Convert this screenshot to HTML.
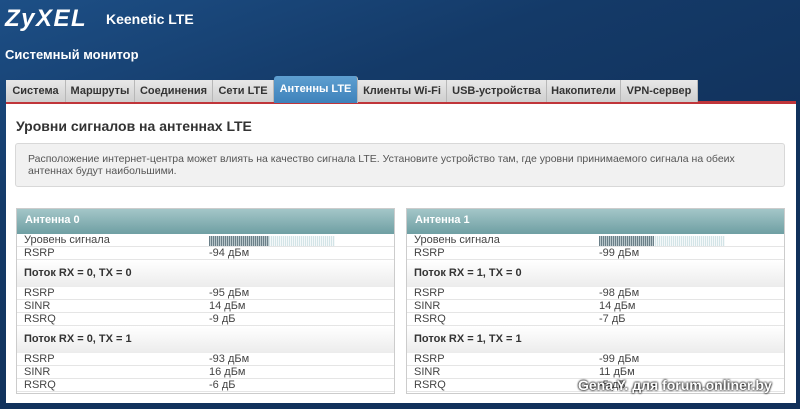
<!DOCTYPE html>
<html><head><meta charset="utf-8"><style>
*{margin:0;padding:0;box-sizing:border-box}
body{width:800px;height:409px;overflow:hidden;background:linear-gradient(160deg,#1d4f86 0%,#143a68 30%,#11325c 60%,#11305a 100%);font-family:"Liberation Sans",Arial,sans-serif;position:relative;color:#333}
.logo{position:absolute;left:5px;top:5px;color:#fff;font-weight:bold;font-style:italic;font-size:24px;letter-spacing:1.5px}
.model{position:absolute;left:106px;top:11px;color:#fff;font-weight:bold;font-size:14px}
.sys{position:absolute;left:5px;top:47px;color:#fff;font-weight:bold;font-size:13px}
.tab{position:absolute;top:80px;height:22px;background:linear-gradient(#e8e8e8,#cfcfcf);border-right:1px solid #b8b8b8;font-size:11px;font-weight:bold;color:#333;text-align:center;line-height:22px}
.tab.act{top:76px;height:27px;background:linear-gradient(#5e9fd0,#3e82bb);color:#fff;border-radius:3px 3px 0 0;line-height:26px}
.panel{position:absolute;left:6px;top:101px;width:790px;height:302px;background:#fff;border-top:3px solid #c0353a}
h1{position:absolute;left:16px;top:118px;font-size:14px;font-weight:bold;color:#333}
.info{position:absolute;left:15px;top:143px;width:770px;height:44px;background:#f1f1f1;border:1px solid #d8d8d8;border-radius:3px;font-size:10.5px;color:#555;padding:9px 12px;line-height:12px}
.tbl{position:absolute;top:208px;width:379px;height:186px;border:1px solid #ccc;font-size:11px;color:#444}
.hd{height:25px;background:linear-gradient(#a3c6c8,#6f9fa3);color:#fff;font-weight:bold;padding-left:8px;line-height:22px}
.r{height:13px;line-height:13px;border-bottom:1px solid #e5e5e5;padding-left:7px;position:relative}
.r span{position:absolute;left:192px}
.s{height:27px;line-height:26px;background:linear-gradient(#fff,#ececec);font-weight:bold;padding-left:7px;color:#333}
.bar{position:absolute;left:192px;top:2px;width:126px;height:10px;background:repeating-linear-gradient(90deg,#d3e4e7 0 1px,#f4f8f9 1px 2px)}
.bar i{display:block;height:100%;background:repeating-linear-gradient(90deg,#6a7f88 0 1px,#b8c6ca 1px 2px)}
.wm{position:absolute;left:578px;top:377px;color:#fff;font-weight:bold;font-size:14px;text-shadow:0 0 2px #000,0 0 2px #000}
</style></head><body>
<div class="logo">ZyXEL</div><div class="model">Keenetic LTE</div>
<div class="sys">Системный монитор</div>
<div class="panel"></div>
<div class="tab" style="left:6px;width:60px">Система</div>
<div class="tab" style="left:66px;width:69px">Маршруты</div>
<div class="tab" style="left:135px;width:78px">Соединения</div>
<div class="tab" style="left:213px;width:61px">Сети LTE</div>
<div class="tab act" style="left:274px;width:84px">Антенны LTE</div>
<div class="tab" style="left:358px;width:89px">Клиенты Wi-Fi</div>
<div class="tab" style="left:447px;width:100px">USB-устройства</div>
<div class="tab" style="left:547px;width:74px">Накопители</div>
<div class="tab" style="left:621px;width:77px">VPN-сервер</div>
<h1>Уровни сигналов на антеннах LTE</h1>
<div class="info">Расположение интернет-центра может влиять на качество сигнала LTE. Установите устройство там, где уровни принимаемого сигнала на обеих антеннах будут наибольшими.</div>
<div class="tbl" style="left:16px">
<div class="hd">Антенна 0</div>
<div class="r">Уровень сигнала<div class="bar"><i style="width:48%"></i></div></div>
<div class="r">RSRP<span>-94 дБм</span></div>
<div class="s">Поток RX = 0, TX = 0</div>
<div class="r">RSRP<span>-95 дБм</span></div>
<div class="r">SINR<span>14 дБм</span></div>
<div class="r">RSRQ<span>-9 дБ</span></div>
<div class="s">Поток RX = 0, TX = 1</div>
<div class="r">RSRP<span>-93 дБм</span></div>
<div class="r">SINR<span>16 дБм</span></div>
<div class="r">RSRQ<span>-6 дБ</span></div>
</div>
<div class="tbl" style="left:406px">
<div class="hd">Антенна 1</div>
<div class="r">Уровень сигнала<div class="bar"><i style="width:44%"></i></div></div>
<div class="r">RSRP<span>-99 дБм</span></div>
<div class="s">Поток RX = 1, TX = 0</div>
<div class="r">RSRP<span>-98 дБм</span></div>
<div class="r">SINR<span>14 дБм</span></div>
<div class="r">RSRQ<span>-7 дБ</span></div>
<div class="s">Поток RX = 1, TX = 1</div>
<div class="r">RSRP<span>-99 дБм</span></div>
<div class="r">SINR<span>11 дБм</span></div>
<div class="r">RSRQ<span>-5 дБ</span></div>
</div>
<div class="wm">Gena Y. для forum.onliner.by</div>
</body></html>
